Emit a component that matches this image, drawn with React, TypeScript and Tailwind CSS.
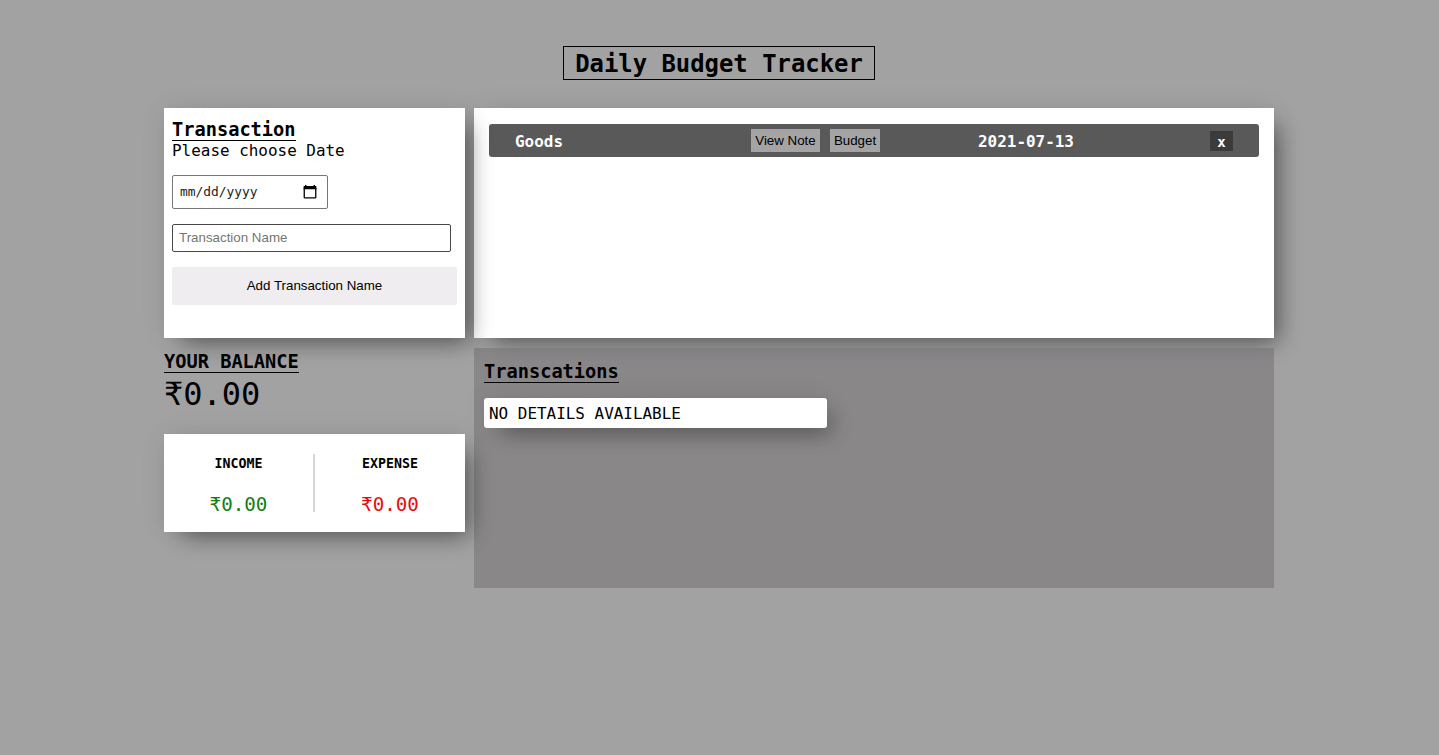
import React from "react";

const SHADOW = "shadow-[11px_11px_22px_-8px_rgba(0,0,0,0.48),0_0_25px_rgba(0,0,0,0.08)]";

function Heading({ children }: { children: React.ReactNode }) {
  return (
    <h3 className="h-6 w-fit border-b border-black pt-px text-[18.66px] leading-[23px] font-bold">
      {children}
    </h3>
  );
}

function CalendarIcon() {
  return (
    <svg width="14" height="14" viewBox="0 0 14 14" fill="none">
      <path d="M1.25 3v9.2c0 .4.2.6.6.6h10.3c.4 0 .6-.2.6-.6V3" stroke="#000" strokeWidth="1.3" />
      <path d="M.6 1.6Q.6 1 1.2 1H2V0h1.4v1h7.2V0H12v1h.8q.6 0 .6.6v2.6H.6z" fill="#000" />
    </svg>
  );
}

function TransactionForm() {
  return (
    <section className={`h-[230px] w-[301px] bg-white px-2 pt-[9px] ${SHADOW}`}>
      <Heading>Transaction</Heading>
      <p className="h-[34px] text-[15.94px] leading-[20px]">Please choose Date</p>
      <div className="flex h-[34px] w-[156px] items-center justify-between rounded-[2px] border border-[#767676] pr-[10px] pl-[7px]">
        <span className="text-[12.9px] leading-[18px] text-[#222]">mm/dd/yyyy</span>
        <CalendarIcon />
      </div>
      <input
        type="text"
        placeholder="Transaction Name"
        className="mt-[15px] block h-[28px] w-[279px] rounded-[2px] border border-[#4a484a] px-[6px] pb-[2px] font-['Liberation_Sans',Arial,sans-serif] text-[13.33px] placeholder:text-[#757575]"
      />
      <button className="mt-[15px] block h-[38px] w-[285px] rounded-[2px] bg-[#efedef] font-['Liberation_Sans',Arial,sans-serif] text-[13.33px]">
        Add Transaction Name
      </button>
    </section>
  );
}

function Total({ label, color }: { label: string; color: string }) {
  return (
    <div className="flex flex-1 flex-col items-center">
      <h4 className="pt-px text-[13.28px] leading-[18px] font-bold">{label}</h4>
      <p className={`mt-[21px] text-[19.2px] leading-[22px] ${color}`}>₹0.00</p>
    </div>
  );
}

export default function App() {
  return (
    <main className="h-[755px] overflow-hidden bg-[#a2a2a3] pt-[46px] font-['DejaVu_Sans_Mono','Liberation_Mono',monospace] text-black">
      <h1 className="ml-[563px] flex h-[34px] w-[312px] items-center justify-center border border-black pt-[2px] text-[23.9px] leading-[32px] font-bold">
        Daily Budget Tracker
      </h1>

      <div className="mt-7 ml-[164px] flex gap-[9px]">
        <div className="relative z-10 w-[301px]">
          <TransactionForm />
          <div className="pt-[11px]">
            <Heading>YOUR BALANCE</Heading>
            <p className="mt-px h-[60px] text-[32px] leading-[40px]">₹0.00</p>
          </div>
          <section className={`flex h-[98px] bg-white pt-5 ${SHADOW}`}>
            <div className="flex h-[58px] w-[151px] border-r-2 border-[#d6d6d6]">
              <Total label="INCOME" color="text-[#118011]" />
            </div>
            <Total label="EXPENSE" color="text-[#e80c0c]" />
          </section>
        </div>

        <div className="w-[800px]">
          <section className={`h-[230px] bg-white px-[15px] pt-4 ${SHADOW}`}>
            <div className="flex h-[33px] items-center rounded-[3px] bg-[#5a595a] px-[26px] text-white">
              <span className="w-[236px] pt-[2px] text-[15.94px] font-bold">Goods</span>
              <div className="flex w-[227px] gap-[10px] font-['Liberation_Sans',Arial,sans-serif] text-[13.33px] text-black">
                <button className="h-[23px] w-[69px] bg-[#a5a4a5]">View Note</button>
                <button className="h-[23px] w-[50px] bg-[#a5a4a5]">Budget</button>
              </div>
              <span className="pt-[2px] text-[15.94px] font-bold">2021-07-13</span>
              <button className="ml-auto flex h-5 w-[23px] items-center justify-center bg-[#3c3b3c] pt-[3px] text-[14px] leading-[17px] font-bold">
                x
              </button>
            </div>
          </section>

          <section className="mt-[10px] h-[240px] bg-[#757173]/55 px-[10px] pt-[11px]">
            <Heading>Transcations</Heading>
            <p className={`mt-[15px] flex h-[30px] w-[343px] items-center rounded-[3px] bg-white px-[5px] pt-px text-[15.94px] ${SHADOW}`}>
              NO DETAILS AVAILABLE
            </p>
          </section>
        </div>
      </div>
    </main>
  );
}
